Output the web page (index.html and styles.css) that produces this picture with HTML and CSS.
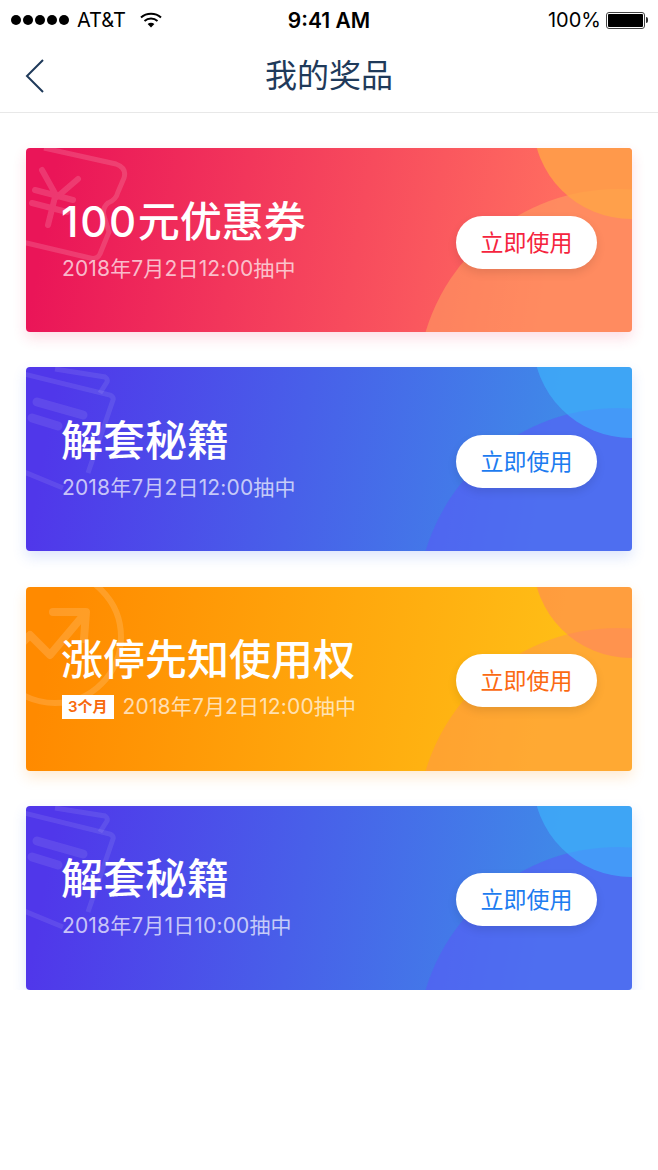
FILE: index.html
```html
<!DOCTYPE html>
<html lang="zh-CN">
<head>
    <meta charset="UTF-8">
    <meta name="viewport" content="width=device-width, initial-scale=1.0">
    <title>我的奖品</title>
    <link rel="stylesheet" href="styles.css">
</head>
<body>
    <div class="status-bar">
        <div class="status-left">
            <span class="signal"><i></i><i></i><i></i><i></i><i></i></span>
            <span>AT&amp;T</span>
            <svg class="wifi" width="22" height="16" viewBox="0 0 22 16">
                <path d="M1 5.5C6.5 .5 15.5 .5 21 5.5" fill="none" stroke="#000" stroke-width="2"/>
                <path d="M4.5 9C8.2 5.8 13.8 5.8 17.5 9" fill="none" stroke="#000" stroke-width="2"/>
                <path d="M7.6 12C9.6 10.4 12.4 10.4 14.4 12L11 15.6Z" fill="#000"/>
            </svg>
        </div>
        <div class="status-time">9:41 AM</div>
        <div class="status-right">
            <span>100%</span>
            <span class="battery"><span class="battery-fill"></span></span>
            <span class="battery-cap"></span>
        </div>
    </div>

    <div class="nav-bar">
        <svg class="back" width="20" height="34" viewBox="0 0 20 34">
            <path d="M18 1L2 17L18 33" fill="none" stroke="#1f3a5a" stroke-width="2"/>
        </svg>
        <h1>我的奖品</h1>
    </div>

    <div class="prize-list">
        <div class="prize-card red">
            <svg class="watermark" width="120" height="130" viewBox="0 0 120 130">
                <path d="M18 0L90 16Q101 20 98 30L92 44Q90 52 82 55Q76 60 78 68L83 84L74 106Q71 112 64 110L-4 94" fill="none" stroke="#fff" stroke-opacity=".15" stroke-width="5"/>
                <path d="M16 22L31 49L52 31M9 42L47 52M6 55L41 64M29 49L22 77" fill="none" stroke="#fff" stroke-opacity=".15" stroke-width="6" stroke-linecap="round" stroke-linejoin="round"/>
            </svg>
            <div class="circle-bottom"></div>
            <div class="circle-top"></div>
            <div class="prize-info">
                <div class="prize-title"><span class="num">100</span>元优惠券</div>
                <div class="prize-date">2018年7月2日12:00抽中</div>
            </div>
            <button class="use-btn">立即使用</button>
        </div>

        <div class="prize-card blue">
            <svg class="watermark" width="120" height="130" viewBox="0 0 120 130">
                <path d="M29 2L79 10Q82 12 81 15L74 26" fill="none" stroke="#fff" stroke-opacity=".09" stroke-width="5"/>
                <path d="M-2 7L84 28Q88 30 87 33L62 106M-2 105L37 121" fill="none" stroke="#fff" stroke-opacity=".09" stroke-width="5"/>
                <path d="M11 35L57 48M6 51L32 59" fill="none" stroke="#fff" stroke-opacity=".09" stroke-width="9" stroke-linecap="round"/>
            </svg>
            <div class="circle-bottom"></div>
            <div class="circle-top"></div>
            <div class="prize-info">
                <div class="prize-title">解套秘籍</div>
                <div class="prize-date">2018年7月2日12:00抽中</div>
            </div>
            <button class="use-btn">立即使用</button>
        </div>

        <div class="prize-card orange">
            <svg class="watermark" width="120" height="130" viewBox="0 0 120 130">
                <circle cx="29" cy="50" r="66" fill="none" stroke="#fff" stroke-opacity=".15" stroke-width="6"/>
                <path d="M-4 56L4 48L24 68L56 30M27 25H60L58 52" fill="none" stroke="#fff" stroke-opacity=".15" stroke-width="8" stroke-linecap="round" stroke-linejoin="round"/>
            </svg>
            <div class="circle-bottom"></div>
            <div class="circle-top"></div>
            <div class="prize-info">
                <div class="prize-title">涨停先知使用权</div>
                <div class="prize-date"><span class="tag">3个月</span>2018年7月2日12:00抽中</div>
            </div>
            <button class="use-btn">立即使用</button>
        </div>

        <div class="prize-card blue">
            <svg class="watermark" width="120" height="130" viewBox="0 0 120 130">
                <path d="M29 2L79 10Q82 12 81 15L74 26" fill="none" stroke="#fff" stroke-opacity=".09" stroke-width="5"/>
                <path d="M-2 7L84 28Q88 30 87 33L62 106M-2 105L37 121" fill="none" stroke="#fff" stroke-opacity=".09" stroke-width="5"/>
                <path d="M11 35L57 48M6 51L32 59" fill="none" stroke="#fff" stroke-opacity=".09" stroke-width="9" stroke-linecap="round"/>
            </svg>
            <div class="circle-bottom"></div>
            <div class="circle-top"></div>
            <div class="prize-info">
                <div class="prize-title">解套秘籍</div>
                <div class="prize-date">2018年7月1日10:00抽中</div>
            </div>
            <button class="use-btn">立即使用</button>
        </div>
    </div>
</body>
</html>
```

FILE: styles.css
```css
body {
    margin: 0;
    background: #fff;
    font-family: Inter, "Noto Sans CJK SC", sans-serif;
}
.status-bar {
    display: flex;
    align-items: center;
    justify-content: space-between;
    position: relative;
    height: 40px;
    padding: 0 10px 0 11px;
    font-size: 20px;
    color: #000;
}
.status-left, .status-right {
    display: flex;
    align-items: center;
}
.signal {
    display: flex;
    gap: 2px;
    margin-right: 8px;
}
.signal i {
    width: 10px;
    height: 10px;
    border-radius: 50%;
    background: #000;
}
.wifi {
    margin-left: 14px;
}
.status-time {
    position: absolute;
    left: 0;
    right: 0;
    text-align: center;
    font-weight: 600;
    font-size: 21px;
}
.battery {
    display: block;
    box-sizing: border-box;
    width: 39px;
    height: 17px;
    margin-left: 5px;
    padding: 1px;
    border: 1px solid #444;
    border-radius: 3px;
}
.battery-fill {
    display: block;
    height: 100%;
    background: #000;
    border-radius: 1px;
}
.battery-cap {
    width: 2px;
    height: 6px;
    margin-left: 1px;
    background: #333;
    border-radius: 0 2px 2px 0;
}
.nav-bar {
    display: flex;
    align-items: center;
    justify-content: center;
    position: relative;
    box-sizing: border-box;
    height: 73px;
    padding-bottom: 6px;
    border-bottom: 1px solid #e8e8e8;
}
.nav-bar h1 {
    margin: 0;
    font-size: 32px;
    font-weight: normal;
    color: #1f3a5a;
}
.back {
    position: absolute;
    left: 25px;
    top: 19px;
}
.prize-list {
    display: flex;
    flex-direction: column;
    gap: 35.3px;
    padding: 35px 26px 0;
}
.prize-card {
    display: flex;
    align-items: center;
    justify-content: space-between;
    position: relative;
    overflow: hidden;
    height: 184px;
    padding: 0 35px;
    border-radius: 4px;
}
.prize-card.red {
    background: linear-gradient(100deg, #ea1558 5%, #ff6c60 85%);
    box-shadow: 0 6px 14px rgba(240, 40, 90, 0.16);
}
.prize-card.blue {
    background: linear-gradient(100deg, #5037ea 5%, #4088e8 85%);
    box-shadow: 0 6px 14px rgba(60, 110, 240, 0.18);
}
.prize-card.orange {
    background: linear-gradient(100deg, #ff8a00 5%, #ffbd16 85%);
    box-shadow: 0 6px 14px rgba(255, 150, 30, 0.2);
}
.watermark {
    position: absolute;
    left: 0;
    top: 0;
}
.circle-top {
    position: absolute;
    left: 507px;
    top: -125px;
    width: 196px;
    height: 196px;
    border-radius: 50%;
}
.circle-bottom {
    position: absolute;
    left: 391px;
    top: 41px;
    width: 402px;
    height: 402px;
    border-radius: 50%;
}
.red .circle-top { background: rgba(255, 165, 70, 0.8); }
.red .circle-bottom { background: rgba(255, 170, 95, 0.5); }
.blue .circle-top { background: rgba(60, 190, 255, 0.55); }
.blue .circle-bottom { background: rgba(90, 90, 245, 0.55); }
.orange .circle-top { background: rgba(255, 120, 110, 0.45); }
.orange .circle-bottom { background: rgba(255, 140, 95, 0.4); }
.prize-info {
    position: relative;
    color: #fff;
    margin-top: -2px;
}
.prize-title {
    font-size: 42px;
    line-height: 50px;
    font-weight: 500;
}
.prize-title .num {
    letter-spacing: 1.7px;
}
.prize-date {
    display: flex;
    align-items: center;
    margin-top: 9px;
    padding-left: 1px;
    font-size: 21px;
    line-height: 26px;
    letter-spacing: 0.15px;
    color: rgba(255, 255, 255, 0.7);
}
.tag {
    margin-right: 9px;
    padding: 0 6px;
    background: #fff;
    color: #f8690c;
    font-size: 15px;
    line-height: 24px;
    font-weight: 600;
    letter-spacing: 0;
}
.use-btn {
    position: relative;
    width: 141px;
    height: 53px;
    margin-top: 4px;
    padding: 0 0 3px;
    border: none;
    border-radius: 27px;
    background: #fff;
    font-family: inherit;
    font-size: 23px;
    box-shadow: 0 4px 10px rgba(0, 0, 0, 0.1);
}
.red .use-btn { color: #f5243e; }
.blue .use-btn { color: #1d7cf0; }
.orange .use-btn { color: #fb6a12; }
```
